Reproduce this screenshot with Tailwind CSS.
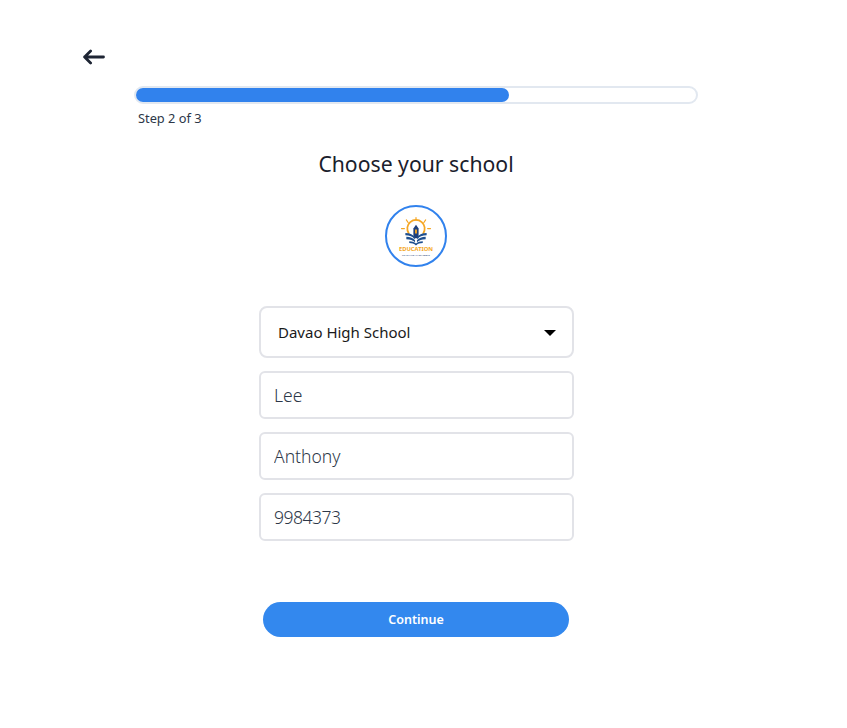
<!DOCTYPE html>
<html lang="en">
<head>
  <meta charset="UTF-8">
  <meta name="viewport" content="width=device-width, initial-scale=1.0">
  <title>Choose your school</title>
  <script src="https://cdn.jsdelivr.net/npm/@tailwindcss/browser@4"></script>
</head>
<body class="bg-white min-h-screen font-['Noto_Sans',sans-serif]">
  <div class="w-[832px] h-[728px] pt-[46px] flex flex-col">

    <!-- back arrow -->
    <button class="ml-[83px] w-[22px] h-[22px] flex items-center text-[#1e2534]">
      <svg width="22" height="22" viewBox="0 0 22 22" fill="none" stroke="currentColor" stroke-width="2.8" stroke-linecap="round" stroke-linejoin="round">
        <path d="M20.500 11H1.600M7.600 5 1.600 11 7.600 17"/>
      </svg>
    </button>

    <!-- progress -->
    <div class="ml-[134px] mt-[18px] w-[564px] h-[18px] rounded-full border-2 border-[#e2e8f0] bg-white">
      <div class="w-[373px] h-[14px] rounded-full bg-[#3182ed]"></div>
    </div>
    <p class="ml-[138px] mt-[5px] text-[12.800px] leading-[18px] text-[#2d3748]">Step 2 of 3</p>

    <h1 class="mt-[22px] text-center text-[21.200px] leading-[30px] text-[#1a202c]">Choose your school</h1>

    <!-- logo -->
    <div class="mt-[26px] self-center w-[62px] h-[62px] rounded-full border-2 border-[#3182ed] bg-white flex flex-col items-center pt-[10px]">
      <svg width="32" height="29" viewBox="0 0 32 30" fill="none" class="shrink-0">
        <g stroke="#f5a623" stroke-width="1.200" stroke-linecap="round">
          <path d="M16 .6v3M6 3l2 3M26 3l-2 3M1 12h3M28 12h3"/>
          <path d="M8.500 17A9 9 0 1 1 23.500 17" stroke-width="1.800"/>
        </g>
        <path d="M16 8l2.700 4v10h-5.400V12z" fill="#1e3f7a"/>
        <path d="M15 13h2v4h-2z" fill="#f5a623"/>
        <path d="M5 16.500c4 0 8 1.500 10 4.500v2c-2-2.500-6-4-10-4z" fill="#1e4f8f"/>
        <path d="M27 16.500c-4 0-8 1.500-10 4.500v2c2-2.500 6-4 10-4z" fill="#1e4f8f"/>
        <path d="M6 20.500c4 0 7 1.500 9 3.500v2c-2-2-5-3-9-3z" fill="#1e4f8f"/>
        <path d="M26 20.500c-4 0-7 1.500-9 3.500v2c2-2 5-3 9-3z" fill="#1e4f8f"/>
        <path d="M9 25c3 0 5 .8 7 2.500 2-1.700 4-2.500 7-2.500v2c-3 0-5 .8-7 2.500-2-1.700-4-2.500-7-2.500z" fill="#1e4f8f"/>
      </svg>
      <span class="h-[6px] text-[5.800px] leading-[6px] font-bold text-[#f5a623] whitespace-nowrap">EDUCATION</span>
      <span class="h-[3px] mt-[2px] text-[2.500px] leading-[3px] text-[#1e3f7a] whitespace-nowrap">TEACHING IN SCHOOLS</span>
    </div>

    <!-- form -->
    <div class="mt-[39px] w-[315px] ml-[259px] flex flex-col gap-[13px]">
      <div class="h-[52px] rounded-[8px] border-2 border-[#e2e3e8] flex items-center justify-between pl-[17px] pr-[16px]">
        <span class="text-[15px] text-[#1a1a1a]">Davao High School</span>
        <span class="w-0 h-0 border-x-[6px] border-x-transparent border-t-[6px] border-t-black mt-[2px]"></span>
      </div>
      <div class="flex flex-col gap-[13px]">
        <input value="Lee" class="h-[48px] w-full rounded-[6px] border-2 border-[#e2e3e8] px-[13px] text-[17.500px] font-light text-[#2d3748] outline-none">
        <input value="Anthony" class="h-[48px] w-full rounded-[6px] border-2 border-[#e2e3e8] px-[13px] text-[17.500px] font-light text-[#2d3748] outline-none">
        <input value="9984373" class="h-[48px] w-full rounded-[6px] border-2 border-[#e2e3e8] px-[13px] text-[17.500px] tracking-[-0.500px] font-light text-[#2d3748] outline-none">
      </div>
    </div>

    <button class="mt-[61px] ml-[263px] w-[306px] h-[35px] pt-[1px] rounded-full bg-[#3388ee] text-white text-[12.500px] font-semibold">Continue</button>
  </div>
</body>
</html>
